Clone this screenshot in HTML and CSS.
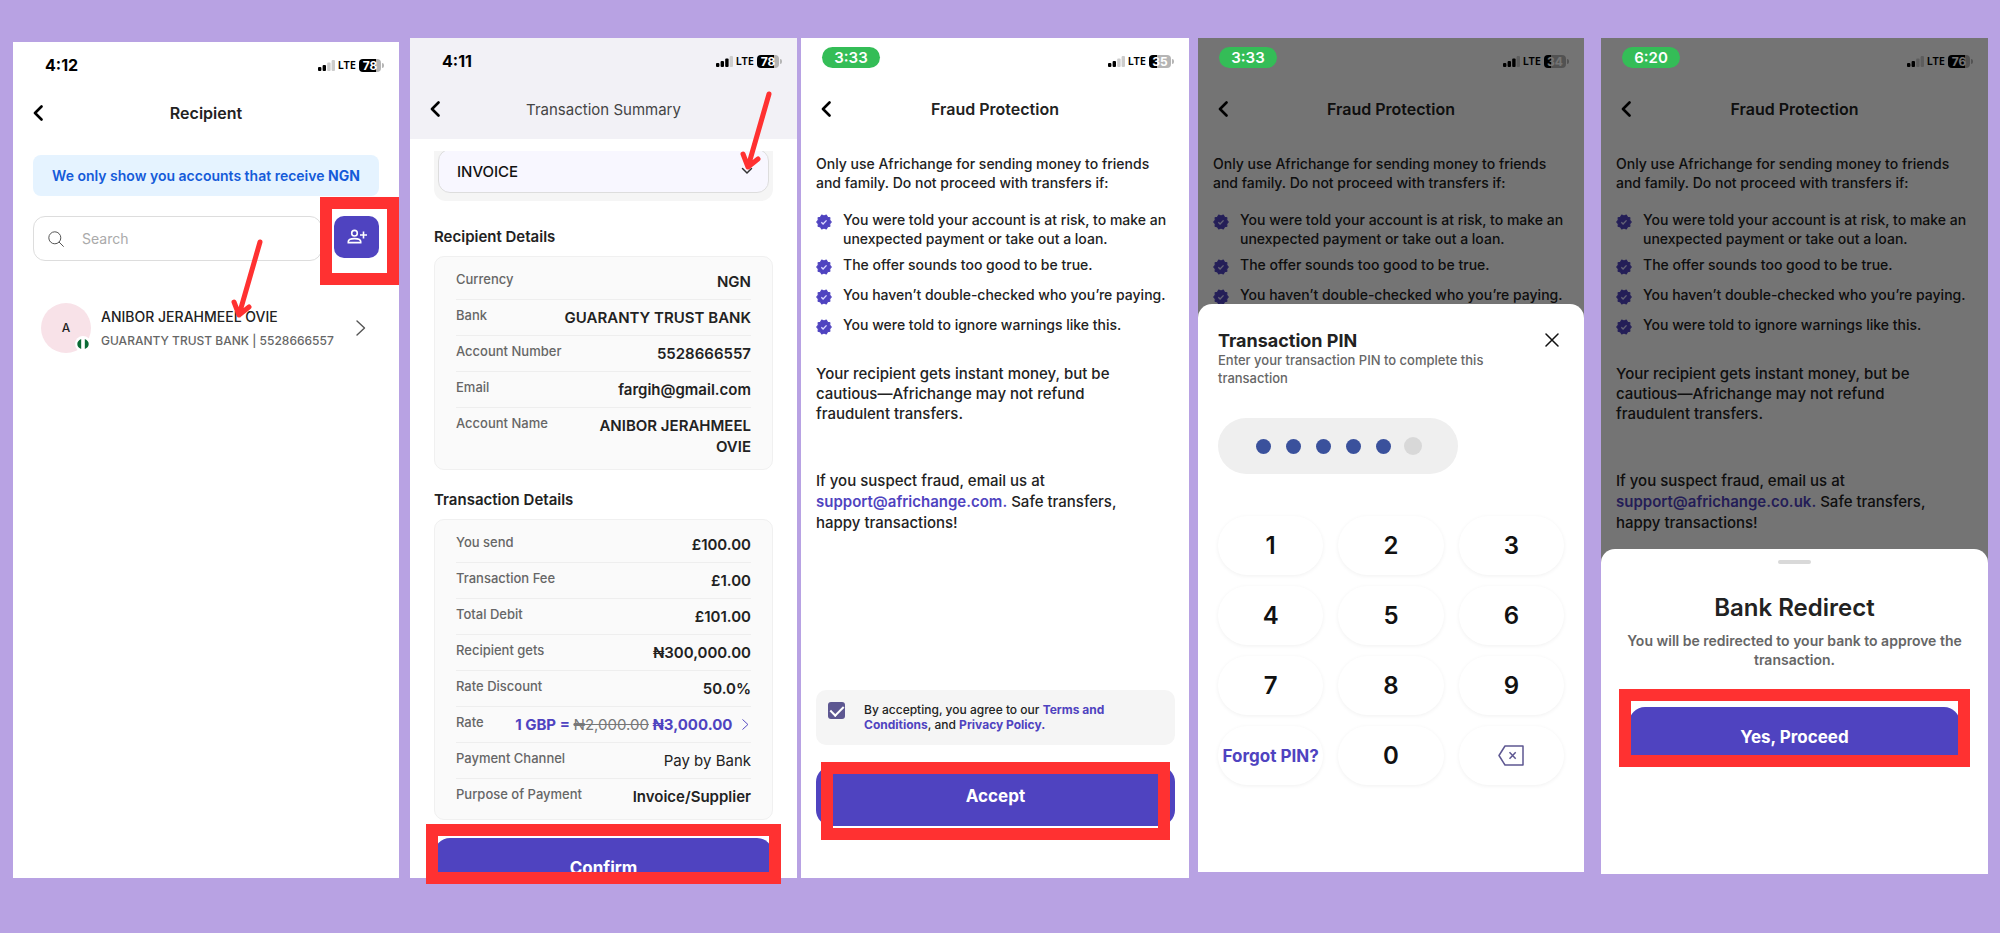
FILE: index.html
```html
<!DOCTYPE html>
<html lang="en">
<head>
    <meta charset="UTF-8">
    <meta name="viewport" content="width=device-width, initial-scale=1.0">
    <title>Africhange - Send Money Guide</title>
    <link rel="stylesheet" href="styles.css">
</head>
<body>
    <!-- Shared icons -->
    <svg class="sprite" aria-hidden="true">
        <symbol id="i-back" viewBox="0 0 10 16"><path d="M8.5 1.5 2 8l6.5 6.5" fill="none" stroke="#000" stroke-width="2.6" stroke-linecap="round" stroke-linejoin="round"/></symbol>
        <symbol id="i-next" viewBox="0 0 10 16"><path d="M1 1l7.5 7L1 15" fill="none" stroke="currentColor" stroke-width="1.4" stroke-linecap="round" stroke-linejoin="round"/></symbol>
        <symbol id="i-signal" viewBox="0 0 17 11"><rect x="0" y="7" width="3.4" height="4" rx="1"/><rect x="4.6" y="5" width="3.4" height="6" rx="1"/><rect class="bar3" x="9.2" y="2.5" width="3.4" height="8.5" rx="1"/><rect class="bar4" x="13.6" y="0" width="3.4" height="11" rx="1"/></symbol>
        <symbol id="i-verified" viewBox="0 0 24 24"><path d="M23 12l-2.44-2.78.34-3.68-3.61-.82-1.89-3.18L12 3 8.6 1.54 6.71 4.72l-3.61.81.34 3.68L1 12l2.44 2.78-.34 3.69 3.61.82 1.89 3.18L12 21l3.4 1.46 1.89-3.18 3.61-.82-.34-3.68z" fill="#4f43c0" stroke="#4f43c0" stroke-width="1.6" stroke-linejoin="round"/><path d="M8 12.4l2.6 2.6 5.2-5.4" fill="none" stroke="#dcd9ff" stroke-width="2"/></symbol>
    </svg>

    <main class="board">
        <!-- 1. Recipient -->
        <section class="phone phone-recipient">
            <div class="status">
                <span class="time">4:12</span>
                <div class="status-icons">
                    <svg class="signal"><use href="#i-signal"/></svg>
                    <span class="lte">LTE</span>
                    <span class="battery" style="--level: 78%">78</span>
                </div>
            </div>
            <header class="top">
                <button class="back" aria-label="Back"><svg><use href="#i-back"/></svg></button>
                <h1>Recipient</h1>
            </header>
            <p class="notice">We only show you accounts that receive <b>NGN</b></p>
            <div class="search-row">
                <div class="search">
                    <svg viewBox="0 0 16 16" fill="none" stroke="#555" stroke-width="1"><circle cx="6.8" cy="6.8" r="6"/><path d="M11.2 11.2l4.2 4.2" stroke-linecap="round"/></svg>
                    <input type="text" placeholder="Search" aria-label="Search">
                </div>
                <div class="marked">
                    <button class="add" aria-label="Add recipient">
                        <svg viewBox="0 0 20 16" fill="none" stroke="#fff" stroke-width="1.6"><circle cx="7.5" cy="4.2" r="2.8"/><path d="M1.3 13.6v-1c0-2 3-3 6.2-3s6.2 1 6.2 3v1zM13 6h7M16.5 2.6v7"/></svg>
                    </button>
                    <span class="frame"></span>
                </div>
            </div>
            <a class="person" href="#">
                <span class="avatar">A
                    <svg class="flag" viewBox="0 0 16 16"><circle cx="8" cy="8" r="8" fill="#fff"/><path d="M6.2 3v10C3.5 12 2.3 10 2.3 8s1.2-4 3.9-5z" fill="#0a6b35"/><path d="M9.8 3v10c2.7-1 3.9-3 3.9-5s-1.2-4-3.9-5z" fill="#0a6b35"/></svg>
                </span>
                <span class="who">
                    <span class="name">ANIBOR JERAHMEEL OVIE</span>
                    <span class="bank">GUARANTY TRUST BANK | 5528666557</span>
                </span>
                <svg class="next"><use href="#i-next"/></svg>
            </a>
            <svg class="arrow" viewBox="0 0 36 84"><path d="M32 4 11 77M6 64l5 13 10-8"/></svg>
        </section>

        <!-- 2. Transaction summary -->
        <section class="phone phone-summary">
            <div class="bar">
                <div class="status">
                    <span class="time">4:11</span>
                    <div class="status-icons">
                        <svg class="signal three"><use href="#i-signal"/></svg>
                        <span class="lte">LTE</span>
                        <span class="battery" style="--level: 78%">78</span>
                    </div>
                </div>
                <header class="top">
                    <button class="back" aria-label="Back"><svg><use href="#i-back"/></svg></button>
                    <h1>Transaction Summary</h1>
                </header>
            </div>
            <div class="purpose">
                <select aria-label="Purpose of payment"><option>INVOICE</option></select>
                <svg viewBox="0 0 12 8"><path d="M1.5 1.5 6 6l4.5-4.5" fill="none" stroke="#333" stroke-width="1.5" stroke-linecap="round"/></svg>
            </div>
            <h2>Recipient Details</h2>
            <dl class="card">
                <div><dt>Currency</dt><dd>NGN</dd></div>
                <div><dt>Bank</dt><dd>GUARANTY TRUST BANK</dd></div>
                <div><dt>Account Number</dt><dd>5528666557</dd></div>
                <div><dt>Email</dt><dd>fargih@gmail.com</dd></div>
                <div><dt>Account Name</dt><dd>ANIBOR JERAHMEEL OVIE</dd></div>
            </dl>
            <h2>Transaction Details</h2>
            <dl class="card">
                <div><dt>You send</dt><dd>£100.00</dd></div>
                <div><dt>Transaction Fee</dt><dd>£1.00</dd></div>
                <div><dt>Total Debit</dt><dd>£101.00</dd></div>
                <div><dt>Recipient gets</dt><dd>₦300,000.00</dd></div>
                <div><dt>Rate Discount</dt><dd>50.0%</dd></div>
                <div><dt>Rate</dt><dd class="rate">1 GBP = <s>₦2,000.00</s> ₦3,000.00 <svg><use href="#i-next"/></svg></dd></div>
                <div><dt>Payment Channel</dt><dd class="plain">Pay by Bank</dd></div>
                <div><dt>Purpose of Payment</dt><dd>Invoice/Supplier</dd></div>
            </dl>
            <div class="cut">
                <button class="primary">Confirm</button>
            </div>
            <span class="frame"></span>
            <svg class="arrow" viewBox="0 0 36 84"><path d="M32 4 11 77M6 64l5 13 10-8"/></svg>
        </section>

        <!-- 3. Fraud protection -->
        <section class="phone phone-fraud">
            <div class="status">
                <span class="time pill">3:33</span>
                <div class="status-icons">
                    <svg class="signal"><use href="#i-signal"/></svg>
                    <span class="lte">LTE</span>
                    <span class="battery" style="--level: 35%">35</span>
                </div>
            </div>
            <header class="top">
                <button class="back" aria-label="Back"><svg><use href="#i-back"/></svg></button>
                <h1>Fraud Protection</h1>
            </header>
            <div class="advice">
                <p>Only use Africhange for sending money to friends and family. Do not proceed with transfers if:</p>
                <ul>
                    <li><svg><use href="#i-verified"/></svg>You were told your account is at risk, to make an unexpected payment or take out a loan.</li>
                    <li><svg><use href="#i-verified"/></svg>The offer sounds too good to be true.</li>
                    <li><svg><use href="#i-verified"/></svg>You haven’t double-checked who you’re paying.</li>
                    <li><svg><use href="#i-verified"/></svg>You were told to ignore warnings like this.</li>
                </ul>
                <p class="big">Your recipient gets instant money, but be cautious—Africhange may not refund fraudulent transfers.</p>
                <p class="big contact">If you suspect fraud, email us at <a href="mailto:support@africhange.com">support@africhange.com.</a> Safe transfers, happy transactions!</p>
            </div>
            <div class="accept">
                <div class="consent">
                    <input type="checkbox" id="agree" checked>
                    <label for="agree">By accepting, you agree to our <a href="#">Terms and Conditions</a>, and <a href="#">Privacy Policy.</a></label>
                </div>
                <div class="marked">
                    <button class="primary">Accept</button>
                    <span class="frame"></span>
                </div>
            </div>
        </section>

        <!-- 4. Transaction PIN -->
        <section class="phone phone-pin">
            <div class="status">
                <span class="time pill">3:33</span>
                <div class="status-icons">
                    <svg class="signal three"><use href="#i-signal"/></svg>
                    <span class="lte">LTE</span>
                    <span class="battery" style="--level: 34%">34</span>
                </div>
            </div>
            <header class="top">
                <button class="back" aria-label="Back"><svg><use href="#i-back"/></svg></button>
                <h1>Fraud Protection</h1>
            </header>
            <div class="advice">
                <p>Only use Africhange for sending money to friends and family. Do not proceed with transfers if:</p>
                <ul>
                    <li><svg><use href="#i-verified"/></svg>You were told your account is at risk, to make an unexpected payment or take out a loan.</li>
                    <li><svg><use href="#i-verified"/></svg>The offer sounds too good to be true.</li>
                    <li><svg><use href="#i-verified"/></svg>You haven’t double-checked who you’re paying.</li>
                </ul>
            </div>
            <div class="scrim"></div>
            <div class="sheet">
                <div class="sheet-head">
                    <div>
                        <h2>Transaction PIN</h2>
                        <p>Enter your transaction PIN to complete this transaction</p>
                    </div>
                    <button class="close" aria-label="Close"><svg viewBox="0 0 14 14"><path d="M1 1l12 12M13 1 1 13" stroke="#111" stroke-width="1.5" stroke-linecap="round"/></svg></button>
                </div>
                <div class="dots"><i></i><i></i><i></i><i></i><i></i><i class="empty"></i></div>
                <div class="keypad">
                    <button>1</button><button>2</button><button>3</button>
                    <button>4</button><button>5</button><button>6</button>
                    <button>7</button><button>8</button><button>9</button>
                    <button class="forgot">Forgot PIN?</button>
                    <button>0</button>
                    <button aria-label="Delete"><svg viewBox="0 0 26 21" fill="none" stroke="#5d5791" stroke-width="1.5" stroke-linejoin="round"><path d="M7 1h18v19H7L1 10.5z"/><path d="M11.5 7.3l6.2 6.4M17.7 7.3l-6.2 6.4"/></svg></button>
                </div>
            </div>
        </section>

        <!-- 5. Bank redirect -->
        <section class="phone phone-redirect">
            <div class="status">
                <span class="time pill">6:20</span>
                <div class="status-icons">
                    <svg class="signal"><use href="#i-signal"/></svg>
                    <span class="lte">LTE</span>
                    <span class="battery" style="--level: 76%">76</span>
                </div>
            </div>
            <header class="top">
                <button class="back" aria-label="Back"><svg><use href="#i-back"/></svg></button>
                <h1>Fraud Protection</h1>
            </header>
            <div class="advice">
                <p>Only use Africhange for sending money to friends and family. Do not proceed with transfers if:</p>
                <ul>
                    <li><svg><use href="#i-verified"/></svg>You were told your account is at risk, to make an unexpected payment or take out a loan.</li>
                    <li><svg><use href="#i-verified"/></svg>The offer sounds too good to be true.</li>
                    <li><svg><use href="#i-verified"/></svg>You haven’t double-checked who you’re paying.</li>
                    <li><svg><use href="#i-verified"/></svg>You were told to ignore warnings like this.</li>
                </ul>
                <p class="big">Your recipient gets instant money, but be cautious—Africhange may not refund fraudulent transfers.</p>
                <p class="big contact">If you suspect fraud, email us at <a href="mailto:support@africhange.co.uk">support@africhange.co.uk.</a> Safe transfers, happy transactions!</p>
            </div>
            <div class="scrim"></div>
            <div class="sheet">
                <span class="handle"></span>
                <h2>Bank Redirect</h2>
                <p>You will be redirected to your bank to approve the transaction.</p>
                <div class="marked">
                    <button class="primary">Yes, Proceed</button>
                    <span class="frame"></span>
                </div>
            </div>
        </section>
    </main>
</body>
</html>
```
FILE: styles.css
```css
* {
    box-sizing: border-box;
}
body {
    margin: 0;
    font-family: Inter, "Liberation Sans", sans-serif;
    background-color: #b8a2e3;
    color: #222;
}
h1, h2, p, ul, dl, dd {
    margin: 0;
    padding: 0;
}
button {
    font-family: inherit;
    border: none;
    padding: 0;
    cursor: pointer;
}
a {
    color: #4f43c0;
    text-decoration: none;
}
.sprite {
    position: absolute;
    width: 0;
    height: 0;
}

/* board */
.board {
    display: grid;
    grid-template-columns: 397fr 391fr 397fr 403fr 387fr;
    min-height: 100vh;
    padding: 38px 12px 55px 13px;
}
.phone {
    position: relative;
    display: flex;
    flex-direction: column;
    background: #fff;
}
.phone-recipient {
    margin-top: 4px;
    margin-right: 11px;
    padding: 0 20px;
}
.phone-summary {
    margin-right: 4px;
}
.phone-fraud {
    margin-right: 9px;
}
.phone-pin {
    margin-right: 17px;
    margin-bottom: 6px;
}
.phone-redirect {
    margin-bottom: 4px;
}

/* status bar */
.status {
    display: flex;
    justify-content: space-between;
    align-items: center;
    height: 46px;
    margin-bottom: 2px;
    padding: 0 18px 0 32px;
}
.phone-recipient .status {
    padding: 0 0 0 12px;
    margin-right: -2px;
}
.time {
    font-size: 16px;
    font-weight: 700;
    color: #000;
}
.pill {
    margin-bottom: 7px;
    margin-left: -11px;
    width: 58px;
    line-height: 21px;
    border-radius: 11px;
    text-align: center;
    font-size: 15px;
    font-weight: 600;
    color: #fff;
    background: #34bd57;
    z-index: 2;
}
.status-icons {
    display: flex;
    align-items: center;
    gap: 3px;
}
.signal {
    --bar3: #ccc;
    width: 17px;
    height: 11px;
}
.three {
    --bar3: #000;
}
.bar3 {
    fill: var(--bar3);
}
.bar4 {
    fill: #ccc;
}
.lte {
    font: 600 11px/14px "Noto Sans", sans-serif;
    color: #000;
}
.battery {
    position: relative;
    width: 22px;
    border-radius: 4px;
    font-size: 12px;
    line-height: 13px;
    font-weight: 700;
    text-align: center;
    color: #fff;
    background: linear-gradient(90deg, #000 var(--level), #b5b5b5 var(--level));
}
.battery::after {
    content: "";
    position: absolute;
    right: -3px;
    top: 4px;
    width: 2px;
    height: 5px;
    border-radius: 0 2px 2px 0;
    background: #b5b5b5;
}

/* title bar */
.top {
    position: relative;
    height: 46px;
    display: flex;
    align-items: center;
    justify-content: center;
}
.top h1 {
    font-size: 16px;
    font-weight: 600;
}
.back {
    position: absolute;
    left: 20px;
    height: 16px;
    background: none;
}
.phone-recipient .back {
    left: 0;
}
.back svg {
    display: block;
    width: 10px;
    height: 16px;
}

/* red markers */
.marked {
    position: relative;
}
.frame {
    position: absolute;
    border: 12px solid #ff3131;
    pointer-events: none;
}
.arrow {
    position: absolute;
    width: 36px;
    height: 84px;
    fill: none;
    stroke: #ff3131;
    stroke-width: 5;
    stroke-linecap: round;
    stroke-linejoin: round;
}

.primary {
    display: block;
    width: 100%;
    height: 60px;
    border-radius: 16px;
    font-size: 17px;
    font-weight: 700;
    color: #fff;
    background: #4f43c0;
}

/* recipient */
.notice {
    margin-top: 19px;
    border-radius: 8px;
    line-height: 41px;
    font-size: 14px;
    font-weight: 600;
    text-align: center;
    color: #155bd9;
    background: #e5f3ff;
}
.notice b {
    font-weight: 700;
}
.search-row {
    display: flex;
    gap: 12px;
    margin-top: 20px;
}
.search {
    flex: 1;
    display: flex;
    align-items: center;
    gap: 18px;
    height: 45px;
    padding: 0 14px;
    border: 1px solid #ddd;
    border-radius: 12px;
}
.search svg {
    width: 16px;
    height: 16px;
}
.search input {
    flex: 1;
    min-width: 0;
    padding: 0;
    border: none;
    outline: none;
    font-family: inherit;
    font-size: 14px;
}
.search input::placeholder {
    color: #aaa;
}
.add {
    display: flex;
    align-items: center;
    justify-content: center;
    width: 45px;
    height: 42px;
    border-radius: 10px;
    background: #4f43c0;
}
.add svg {
    width: 20px;
    height: 16px;
}
.phone-recipient .frame {
    inset: -19px -20px -24px -14px;
}
.person {
    display: flex;
    align-items: center;
    gap: 10px;
    margin-top: 42px;
    padding: 0 13px 0 8px;
    color: #222;
}
.avatar {
    position: relative;
    flex: none;
    width: 50px;
    line-height: 50px;
    border-radius: 50%;
    text-align: center;
    font-size: 12px;
    font-weight: 500;
    background: #f8e2e8;
}
.flag {
    position: absolute;
    right: 0;
    bottom: 1px;
    width: 16px;
    height: 16px;
}
.who {
    flex: 1;
    display: flex;
    flex-direction: column;
    gap: 4px;
    padding-top: 2px;
    white-space: nowrap;
}
.name {
    font-size: 14px;
    line-height: 20px;
    font-weight: 500;
}
.bank {
    font-size: 12px;
    line-height: 20px;
    font-weight: 500;
    color: #666;
}
.next {
    width: 10px;
    height: 16px;
    color: #555;
}
.phone-recipient .arrow {
    right: 135px;
    top: 196px;
}

/* transaction summary */
.bar {
    height: 101px;
    background: #f2f1f6;
}
.bar h1 {
    font-size: 15px;
    font-weight: 400;
    color: #444;
}
.purpose {
    position: relative;
    margin: 12px 24px 0;
    padding: 0 4px 8px;
    border-radius: 0 0 12px 12px;
    overflow: hidden;
    background: #f5f5f5;
}
.purpose select {
    display: block;
    width: 100%;
    height: 44px;
    margin-top: -2px;
    padding: 0 18px;
    border: 1px solid #ddd;
    border-radius: 12px;
    appearance: none;
    font-family: inherit;
    font-size: 15px;
    font-weight: 500;
    color: #111;
    background: #f8f7ff;
}
.purpose svg {
    position: absolute;
    right: 20px;
    top: 16px;
    width: 12px;
    height: 8px;
}
.phone-summary h2 {
    margin: 25px 24px 9px;
    font-size: 15px;
    line-height: 21px;
    font-weight: 600;
}
.card {
    margin: 0 24px;
    padding: 7px 21px 5px;
    border: 1px solid #f0f0f0;
    border-radius: 10px;
    background: #fafafa;
}
.card + h2 {
    margin-top: 19px;
}
.card div {
    display: flex;
    justify-content: space-between;
    gap: 16px;
    padding: 7px 0;
    border-bottom: 1px solid #eee;
}
.card div:last-child {
    border-bottom: none;
}
.card dt {
    font-size: 13px;
    line-height: 17px;
    font-weight: 500;
    white-space: nowrap;
    color: #666;
}
.card dd {
    font-size: 15px;
    line-height: 21px;
    font-weight: 600;
    text-align: right;
}
.card .plain {
    font-weight: 400;
}
.card .rate {
    font-weight: 700;
    white-space: nowrap;
    color: #4f43c0;
}
.rate s {
    font-weight: 400;
    color: #777;
}
.rate svg {
    width: 7px;
    height: 11px;
    margin: 0 2px 0 6px;
}
.cut {
    height: 40px;
    margin: auto 24px 0;
    overflow: hidden;
}
.phone-summary .frame {
    left: 16px;
    right: 16px;
    bottom: -6px;
    height: 60px;
}
.phone-summary .arrow {
    right: 24px;
    top: 52px;
}

/* fraud protection */
.advice {
    margin-top: 22px;
    padding: 0 14px 0 15px;
    font-size: 14px;
    line-height: 19px;
    font-weight: 500;
}
.advice p {
    padding-right: 18px;
}
.advice ul {
    display: flex;
    flex-direction: column;
    gap: 7px;
    margin-top: 18px;
    list-style: none;
}
.advice li {
    display: flex;
    gap: 11px;
    min-height: 23px;
}
.advice li svg {
    flex: none;
    width: 16px;
    height: 16px;
    margin-top: 4px;
}
.advice .big {
    margin-top: 26px;
    padding-right: 24px;
    font-size: 15px;
    line-height: 20px;
}
.advice .contact {
    margin-top: 46px;
    line-height: 21px;
}
.contact a {
    font-weight: 600;
}
.accept {
    margin: auto 14px 52px 15px;
}
.consent {
    display: flex;
    gap: 19px;
    padding: 12px;
    margin-bottom: 21px;
    border-radius: 10px;
    font-size: 12px;
    line-height: 15px;
    font-weight: 500;
    background: #f5f5f5;
}
.consent input {
    flex: none;
    appearance: none;
    width: 17px;
    height: 17px;
    margin: 0;
    border-radius: 3px;
    background: #5d5791;
}
.consent input:checked::before {
    content: "";
    display: block;
    width: 6px;
    height: 11px;
    margin: 1px 0 0 5px;
    border: solid #fff;
    border-width: 0 2px 2px 0;
    transform: rotate(45deg);
}
.consent label {
    max-width: 260px;
    padding-bottom: 1px;
}
.consent a {
    font-weight: 700;
}
.accept .frame {
    inset: -4px 5px -14px;
}

/* bottom sheets */
.scrim {
    position: absolute;
    inset: 0;
    background: rgba(0, 0, 0, 0.545);
}
.sheet {
    position: absolute;
    left: 0;
    right: 0;
    bottom: 0;
    border-radius: 14px 14px 0 0;
    background: #fff;
}
.phone-pin .sheet {
    padding: 26px 20px 87px;
}
.sheet-head {
    display: flex;
    justify-content: space-between;
    align-items: flex-start;
}
.sheet-head h2 {
    font-size: 18px;
    line-height: 21px;
    font-weight: 700;
}
.sheet-head p {
    max-width: 300px;
    font-size: 13px;
    line-height: 18px;
    font-weight: 500;
    color: #666;
}
.close {
    width: 14px;
    height: 14px;
    margin: 3px 5px 0 0;
    background: none;
}
.close svg {
    display: block;
}
.dots {
    display: flex;
    align-items: center;
    justify-content: center;
    gap: 15px;
    width: 240px;
    height: 56px;
    margin-top: 31px;
    border-radius: 28px;
    background: #efefef;
}
.dots i {
    width: 15px;
    height: 15px;
    border-radius: 50%;
    background: #3a519c;
}
.dots .empty {
    width: 18px;
    height: 18px;
    margin: 0 -2px;
    background: #d8d8d8;
}
.keypad {
    display: grid;
    grid-template-columns: repeat(3, 1fr);
    gap: 11px 15px;
    margin-top: 42px;
}
.keypad button {
    display: flex;
    align-items: center;
    justify-content: center;
    height: 59px;
    border-radius: 30px;
    font-size: 24px;
    font-weight: 600;
    color: #111;
    background: #fff;
    box-shadow: 0 1px 4px rgba(0, 0, 0, 0.06);
}
.keypad svg {
    width: 26px;
    height: 21px;
}
.keypad .forgot {
    font-size: 17px;
    font-weight: 700;
    white-space: nowrap;
    color: #4f43c0;
}
.phone-redirect .sheet {
    display: flex;
    flex-direction: column;
    align-items: center;
    padding: 11px 20px 107px;
    text-align: center;
}
.handle {
    width: 33px;
    height: 4px;
    border-radius: 2px;
    background: #d9d9d9;
}
.phone-redirect h2 {
    margin-top: 29px;
    font-size: 24px;
    line-height: 30px;
    font-weight: 600;
}
.phone-redirect .sheet p {
    margin-top: 8px;
    font-size: 14px;
    line-height: 19px;
    font-weight: 600;
    color: #666;
}
.phone-redirect .marked {
    align-self: stretch;
    margin: 38px 8px 0;
}
.phone-redirect .frame {
    inset: -18px -10px 0;
}
```
